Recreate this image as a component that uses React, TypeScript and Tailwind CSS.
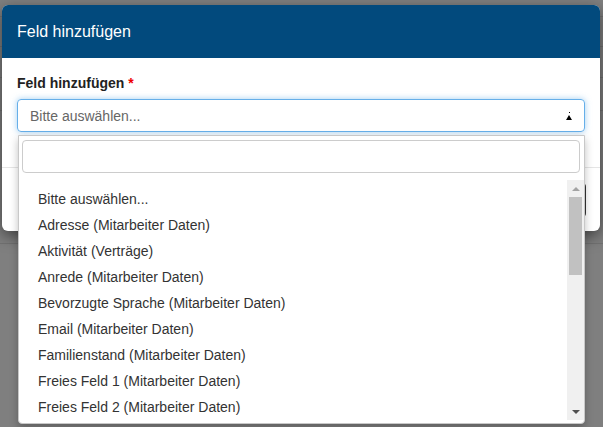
import { FC } from "react";

const options = [
  "Bitte auswählen...",
  "Adresse (Mitarbeiter Daten)",
  "Aktivität (Verträge)",
  "Anrede (Mitarbeiter Daten)",
  "Bevorzugte Sprache (Mitarbeiter Daten)",
  "Email (Mitarbeiter Daten)",
  "Familienstand (Mitarbeiter Daten)",
  "Freies Feld 1 (Mitarbeiter Daten)",
  "Freies Feld 2 (Mitarbeiter Daten)",
];

// page rows behind the dimmed backdrop
const rowHeights = ["h-[17px]", "h-[30px]", "h-[31px]", "h-[33px]", "h-[133px]"];

const ScrollBar: FC = () => (
  <div className="flex w-[17px] flex-col items-center bg-[#f0f0f0]">
    <div className="flex h-[17px] items-center justify-center">
      <span className="h-0 w-0 border-x-[4px] border-b-[4px] border-x-transparent border-b-[#a3a3a3]" />
    </div>
    <div className="h-[78px] w-[13px] bg-[#c1c1c1]" />
    <div className="flex-1" />
    <div className="flex h-[17px] items-center justify-center">
      <span className="h-0 w-0 border-x-[4px] border-t-[4px] border-x-transparent border-t-[#505050]" />
    </div>
  </div>
);

const FieldSelect: FC = () => (
  <div className="relative">
    <div className="flex h-[33px] items-center rounded-[4px] border border-[#66afe9] pl-[12px] pr-[12px] text-sm text-[#666] shadow-[0_0_6px_rgba(102,175,233,0.6)]">
      <span className="flex-1">Bitte auswählen...</span>
      <span className="flex flex-col items-center">
        <span className="mb-[2px] h-px w-px bg-black" />
        <span className="h-0 w-0 border-x-[3px] border-b-[5px] border-x-transparent border-b-black" />
      </span>
    </div>

    <div className="absolute left-[1px] top-[36px] z-10 w-[567px] rounded-b-[4px] border border-[#c8c8c8] bg-white shadow-[0_4px_8px_rgba(0,0,0,0.25)]">
      <div className="pl-[3px] pr-[4px] pt-[4px]">
        <div className="h-[33px] rounded-[4px] border border-[#ccc]" />
      </div>
      <div className="mt-[7px] flex h-[240px] mb-[3px]">
        <ul className="flex-1 pt-[6px]">
          {options.map((o) => (
            <li key={o} className="h-[26px] pl-[19px] text-sm leading-[26px] text-[#333]">
              {o}
            </li>
          ))}
        </ul>
        <ScrollBar />
      </div>
    </div>
  </div>
);

export default function App() {
  return (
    <div className="relative h-[427px] w-[603px] overflow-hidden bg-[#7f7f7f] font-['Liberation_Sans',Arial,sans-serif]">
      {rowHeights.map((h, i) => (
        <div key={i} className={`${h} border-b border-[#727272]`} />
      ))}

      <div className="absolute left-[2px] top-[5px] w-[598px] rounded-[6px] bg-white shadow-[0_5px_15px_rgba(0,0,0,0.5)]">
        <div className="flex h-[53px] items-center rounded-t-[6px] bg-[#024a7d] px-[15px] text-base text-white">
          Feld hinzufügen
        </div>
        <div className="px-[15px] pb-[35px] pt-[15px]">
          <div className="mb-[6px] text-sm font-bold leading-5 text-[#222]">
            Feld hinzufügen <span className="text-[#e00]">*</span>
          </div>
          <FieldSelect />
        </div>
        <div className="flex h-[64px] items-center justify-end gap-[5px] border-t border-[#e5e5e5] pl-[15px] pr-[14px]">
          <button className="h-[34px] rounded-[4px] border border-[#ccc] bg-white px-[12px] text-sm text-[#333]">
            Abbrechen
          </button>
          <button className="h-[34px] rounded-[4px] bg-[#333] px-[12px] text-sm text-white">
            Hinzufügen
          </button>
        </div>
      </div>
    </div>
  );
}
